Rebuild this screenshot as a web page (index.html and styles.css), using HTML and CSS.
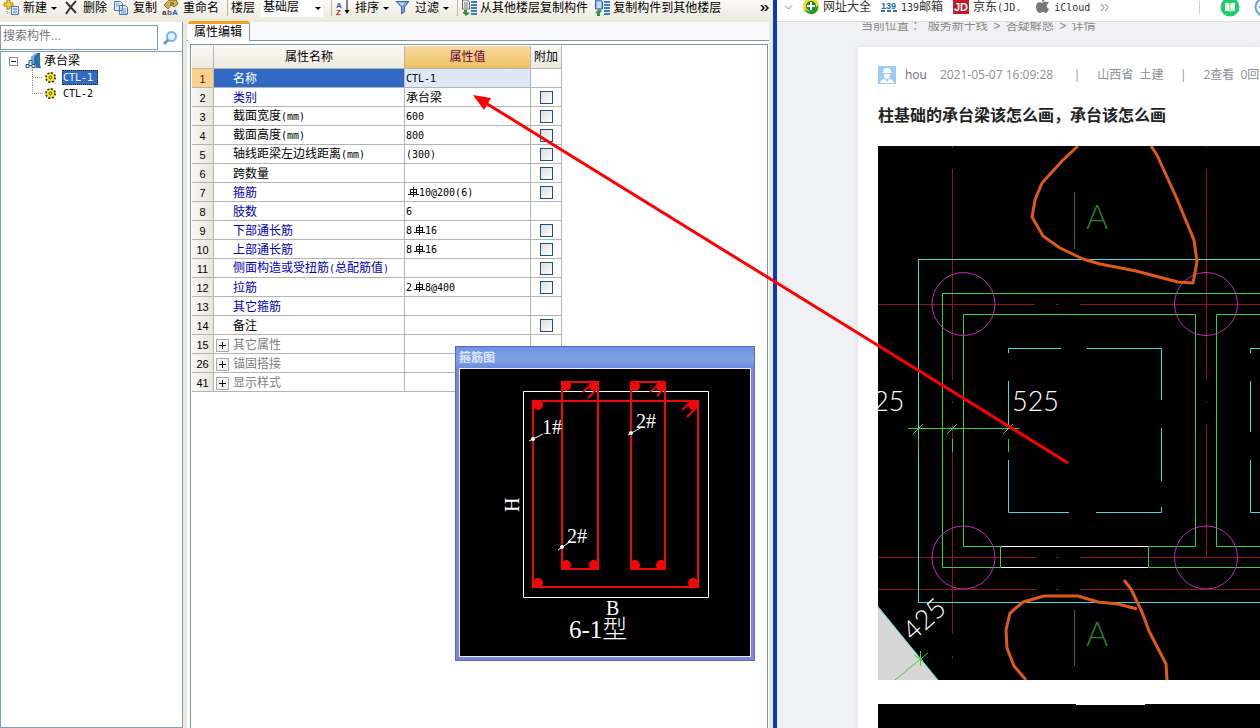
FILE: index.html
```html
<!DOCTYPE html>
<html lang="zh-CN">
<head>
<meta charset="utf-8">
<title>属性编辑</title>
<link rel="stylesheet" href="styles.css">
</head>
<body>
<div class="desktop">
  <section class="app">
    <header class="toolbar">
      <button class="tool"><svg class="icon" viewBox="0 0 16 16"><path d="M4 0h3v3h3v3H7v3H4V6H1V3h3z" fill="#f5cf3c" stroke="#b08a18"/><path d="M8.500 6.500h7v8h-7z" fill="#dbe9fb" stroke="#4876b8"/><path d="M10 9h4M10 12h4" stroke="#4876b8"/><path d="M4 9v4h4" fill="none" stroke="#777" stroke-dasharray="1 1"/></svg>新建<i class="caret"></i></button>
      <button class="tool"><svg class="icon" viewBox="0 0 16 16"><path d="M3 2l10 11M13 1C9 5 6 9 3 14" fill="none" stroke="#3a3a3a" stroke-width="2"/></svg>删除</button>
      <button class="tool"><svg class="icon" viewBox="0 0 16 16"><path d="M1.500 1.500h6l2 2v7h-8zM6.500 5.500h6l2 2v7h-8z" fill="#dce9fb" stroke="#4b74b4"/><path d="M3 4h3M3 6h3M8 9h5M8 11h5M8 13h5" stroke="#6d94cd"/></svg>复制</button>
      <button class="tool"><svg class="icon" viewBox="0 0 16 16"><path d="M1 5l5-5h7l2 4-4 3-3-2-3 4z" fill="#d9ae52" stroke="#8b6b2a"/><path d="M7 2h4v3H7z" fill="#6f8f54"/><text class="icon-letter" x="-1" y="15" fill="#333">a</text><text class="icon-letter" x="4" y="15" fill="#555">b</text><text class="icon-letter" x="9" y="15" fill="#2258a5">A</text></svg>重命名</button>
      <span class="separator"></span>
      <label class="floor-label" for="floor">楼层</label>
      <span class="floor-box"><select id="floor"><option>基础层</option></select><i class="caret"></i></span>
      <span class="separator"></span>
      <button class="tool"><svg class="icon" viewBox="0 0 16 16"><text class="icon-letter" x="1" y="8" fill="#2858a8">A</text><text class="icon-letter" x="1" y="15" fill="#b52b2b">Z</text><path d="M12 0v12" stroke="#111"/><path d="M9.500 10h5L12 14z"/></svg>排序<i class="caret"></i></button>
      <button class="tool"><svg class="icon" viewBox="0 0 16 16"><path d="M1 1.500h13L9.500 7v5l-3 2V7z" fill="#6f9fe4" stroke="#4068b4"/><path d="M3 2.500h7L7.500 6z" fill="#b9d4f8"/></svg>过滤<i class="caret"></i></button>
      <span class="separator"></span>
      <button class="tool wide"><svg class="icon" viewBox="0 0 16 16"><path d="M1.500 0v9h7V2L6.500 0z" fill="#eee" stroke="#666"/><path d="M3 3h4M3 5h4M3 7h4" stroke="#777"/><path d="M10 2h6M10 5h6M10 8h6M10 11h6M10 14h6" stroke="#397dc6" stroke-width="2"/><path d="M3 10v2H1l4 4 4-3-3-1v-2z" fill="#319442"/></svg>从其他楼层复制构件</button>
      <button class="tool wide"><svg class="icon" viewBox="0 0 16 16"><path d="M1.500 0v9h7V2L6.500 0z" fill="#8cb9ee" stroke="#315f9e"/><path d="M3 3h4M3 5h4M3 7h4" stroke="#fff"/><path d="M10 2h6M10 5h6M10 8h6M10 11h6M10 14h6" stroke="#397dc6" stroke-width="2"/><path d="M3 16v-3H1l4-4 3 2-2 2v3z" fill="#319442"/></svg>复制构件到其他楼层</button>
      <button class="tool more" aria-label="更多"><svg class="chevrons" viewBox="0 0 9 6"><path d="M1 0l3 3-3 3M5 0l3 3-3 3" fill="none" stroke="#111" stroke-width="1.500"/></svg></button>
    </header>
    <div class="workspace">
      <aside class="sidebar">
        <div class="search">
          <input class="search-input" type="text" placeholder="搜索构件..." aria-label="搜索构件">
          <button class="search-button" aria-label="搜索"><svg class="icon" viewBox="0 0 16 16"><circle cx="9.500" cy="6.500" r="4.500" fill="#e4f3fd" stroke="#72b5e4" stroke-width="2"/><path d="M6 10l-4 4" stroke="#6299cf" stroke-width="3"/></svg></button>
        </div>
        <div class="tree">
          <div class="tree-root"><svg class="expander" viewBox="0 0 9 9"><path d="M.5.5h8v8h-8z" fill="#fff" stroke="#8b8b8b"/><path d="M2 4.500h5" stroke="#111"/></svg><svg class="icon" viewBox="0 0 16 16"><path d="M6 4l5-4h4v11l1 4h-5v-4H9z" fill="#2674b2"/><path d="M6 4l5-4h3L10 4v7H6z" fill="#6cb0e2"/><path d="M1 11.500h3v-4h3v4h3v3H7v-2H4v2H1z" fill="#e2f1fc" stroke="#174f83"/><path d="M10 4l4-4M10 4v8" fill="none" stroke="#124a7c"/></svg>承台梁</div>
          <ul class="tree-list">
            <li class="tree-item"><svg class="gear" viewBox="0 0 11 11"><circle cx="5.500" cy="5.500" r="4.500" fill="#ffef2b" stroke="#3d3900" stroke-width="2" stroke-dasharray="2 1.500"/><circle cx="5.500" cy="5.500" r="3.500" fill="#ffef2b"/><circle cx="5.500" cy="5.500" r="1.500" fill="none" stroke="#554f00"/></svg><span class="tree-name selected">CTL-1</span></li>
            <li class="tree-item"><svg class="gear" viewBox="0 0 11 11"><circle cx="5.500" cy="5.500" r="4.500" fill="#ffef2b" stroke="#3d3900" stroke-width="2" stroke-dasharray="2 1.500"/><circle cx="5.500" cy="5.500" r="3.500" fill="#ffef2b"/><circle cx="5.500" cy="5.500" r="1.500" fill="none" stroke="#554f00"/></svg><span class="tree-name">CTL-2</span></li>
          </ul>
        </div>
      </aside>
      <main class="editor">
        <div class="tabs"><button class="tab">属性编辑</button></div>
        <div class="panel">
          <table class="props">
            <colgroup><col class="col-num"><col class="col-name"><col class="col-value"><col class="col-extra"></colgroup>
            <thead><tr><th></th><th>属性名称</th><th class="active">属性值</th><th>附加</th></tr></thead>
            <tbody>
              <tr class="current"><th>1</th><td class="name">名称</td><td class="latin">CTL-1</td><td></td></tr>
              <tr><th>2</th><td class="name key">类别</td><td>承台梁</td><td class="check"><input type="checkbox" aria-label="类别 附加"></td></tr>
              <tr><th>3</th><td class="name">截面宽度<span class="latin">(mm)</span></td><td class="latin">600</td><td class="check"><input type="checkbox" aria-label="截面宽度 附加"></td></tr>
              <tr><th>4</th><td class="name">截面高度<span class="latin">(mm)</span></td><td class="latin">800</td><td class="check"><input type="checkbox" aria-label="截面高度 附加"></td></tr>
              <tr><th>5</th><td class="name">轴线距梁左边线距离<span class="latin">(mm)</span></td><td class="latin">(300)</td><td class="check"><input type="checkbox" aria-label="轴线距梁左边线距离 附加"></td></tr>
              <tr><th>6</th><td class="name">跨数量</td><td></td><td class="check"><input type="checkbox" aria-label="跨数量 附加"></td></tr>
              <tr><th>7</th><td class="name key">箍筋</td><td class="latin"><svg class="rebar" viewBox="0 0 12 10"><path d="M6.500 0v10M3 2.500h7M1 7.500h11M3.500 2v6M9.500 2v6M3 5.500h7" fill="none" stroke="#111"/></svg>10@200(6)</td><td class="check"><input type="checkbox" aria-label="箍筋 附加"></td></tr>
              <tr><th>8</th><td class="name key">肢数</td><td class="latin">6</td><td></td></tr>
              <tr><th>9</th><td class="name key">下部通长筋</td><td class="latin">8<svg class="rebar" viewBox="0 0 12 10"><path d="M6.500 0v10M3 2.500h7M1 7.500h11M3.500 2v6M9.500 2v6M3 5.500h7" fill="none" stroke="#111"/></svg>16</td><td class="check"><input type="checkbox" aria-label="下部通长筋 附加"></td></tr>
              <tr><th>10</th><td class="name key">上部通长筋</td><td class="latin">8<svg class="rebar" viewBox="0 0 12 10"><path d="M6.500 0v10M3 2.500h7M1 7.500h11M3.500 2v6M9.500 2v6M3 5.500h7" fill="none" stroke="#111"/></svg>16</td><td class="check"><input type="checkbox" aria-label="上部通长筋 附加"></td></tr>
              <tr><th>11</th><td class="name key">侧面构造或受扭筋<span class="latin">(</span>总配筋值<span class="latin">)</span></td><td></td><td class="check"><input type="checkbox" aria-label="侧面构造或受扭筋 附加"></td></tr>
              <tr><th>12</th><td class="name key">拉筋</td><td class="latin">2<svg class="rebar" viewBox="0 0 12 10"><path d="M6.500 0v10M3 2.500h7M1 7.500h11M3.500 2v6M9.500 2v6M3 5.500h7" fill="none" stroke="#111"/></svg>8@400</td><td class="check"><input type="checkbox" aria-label="拉筋 附加"></td></tr>
              <tr><th>13</th><td class="name key">其它箍筋</td><td></td><td></td></tr>
              <tr><th>14</th><td class="name">备注</td><td></td><td class="check"><input type="checkbox" aria-label="备注 附加"></td></tr>
              <tr><th>15</th><td class="group"><button class="plus" aria-label="展开其它属性"></button>其它属性</td><td></td><td></td></tr>
              <tr><th>26</th><td class="group"><button class="plus" aria-label="展开锚固搭接"></button>锚固搭接</td><td></td><td></td></tr>
              <tr><th>41</th><td class="group"><button class="plus" aria-label="展开显示样式"></button>显示样式</td><td></td><td></td></tr>
            </tbody>
          </table>
        </div>
      </main>
    </div>
    <section class="popup">
      <h2 class="popup-title">箍筋图</h2>
      <svg class="stirrup" viewBox="460 369 290 287">
        <path d="M523.500 391.500h185v206h-185z" fill="none" stroke="#fff"/>
        <g fill="none" stroke="#f00808" stroke-width="2"><path d="M533 401h165v186H533zM562 382h36v187h-36zM631 382h34v187h-34z"/><path d="M583 392l9-8M588 398l9-9M650 392l9-8M657 396l7-7M682 410l9-8M687 417l9-9"/></g>
        <g fill="#f00808"><circle cx="538" cy="405" r="5"/><circle cx="693" cy="405" r="5"/><circle cx="538" cy="583" r="5"/><circle cx="693" cy="583" r="5"/><circle cx="566" cy="386" r="5"/><circle cx="594" cy="386" r="5"/><circle cx="635" cy="386" r="5"/><circle cx="661" cy="386" r="5"/><circle cx="566" cy="565" r="5"/><circle cx="594" cy="565" r="5"/><circle cx="635" cy="565" r="5"/><circle cx="661" cy="565" r="5"/></g>
        <path d="M529 441l14-7M628 435l14-8M558 550l13-9" stroke="#fff"/>
        <g fill="#fff"><circle cx="533" cy="439" r="2"/><circle cx="631" cy="433" r="2"/><circle cx="562" cy="547" r="2"/>
        <text class="mark" x="542" y="434">1#</text><text class="mark" x="636" y="428">2#</text><text class="mark" x="567" y="543">2#</text>
        <text class="mark" x="606" y="615">B</text><text class="mark" transform="translate(519 512) rotate(-90)">H</text>
        <text class="caption" x="569" y="638">6-1型</text></g>
      </svg>
    </section>
  </section>

  <section class="browser">
    <nav class="bookmarks">
      <button class="fold" aria-label="折叠"><svg class="fold-icon" viewBox="0 0 9 6"><path d="M1 1l3.500 3.500L8 1" fill="none" stroke="#888"/></svg></button>
      <a class="bookmark" href="#"><svg class="icon" viewBox="0 0 16 16"><circle cx="8" cy="7" r="8" fill="#f3dd25"/><path d="M1 10Q8 16 15 6v4q-2 6-8 5-4-1-6-5z" fill="#209a34"/><circle cx="8" cy="7" r="5" fill="#168b32"/><path d="M8 3v8M4 7h8" stroke="#fff" stroke-width="2"/></svg>网址大全</a>
      <a class="bookmark" href="#"><svg class="icon" viewBox="0 0 16 16"><text class="icon-139" x="0" y="10">139</text><path d="M0 12h4M6 12h4M12 12h4" stroke="#3474ae" stroke-width="2"/></svg><span><span class="latin-web">139</span>邮箱</span></a>
      <a class="bookmark" href="#"><svg class="icon" viewBox="0 0 16 16"><path d="M0-1h16v16H0z" fill="#c71728"/><text class="icon-jd" x="1" y="12">JD</text></svg><span>京东<span class="latin-web">(JD.</span></span></a>
      <a class="bookmark apple" href="#"><svg class="icon" viewBox="0 0 16 16"><path d="M8 4C5 2 2 4 2 8c0 3 2 6 4 6 1 0 1-1 3-1s2 1 3 1 2-2 3-4c-3-1-3-5 0-6-2-2-5-1-7 0zM8 3c0-2 1-3 3-4 0 2-1 4-3 4z" fill="#777"/></svg><span class="latin-web">iCloud</span></a>
      <button class="fold" aria-label="更多书签"><svg class="fold-icon" viewBox="0 0 9 7"><path d="M1 0l3 3.500L1 7M5 0l3 3.500L5 7" fill="none" stroke="#777"/></svg></button>
      <span class="bookmark-end"><svg class="book" viewBox="0 0 20 20"><circle cx="10" cy="10" r="9.500" fill="#21cc6a"/><path d="M5 6q3-1 5 1 2-2 5-1v8q-3-1-5 1-2-2-5-1z" fill="#e9fff1"/><path d="M10 7v8" stroke="#66d893"/></svg><svg class="book" viewBox="0 0 20 20"><circle cx="10" cy="10" r="8.500" fill="#eef5ff" stroke="#6d9ee8" stroke-width="2"/><path d="M5 10h10" stroke="#6d9ee8" stroke-width="2"/></svg></span>
    </nav>
    <div class="page">
      <div class="crumbs">当前位置 ： <a href="#">服务新干线</a><span class="crumb-sep">&gt;</span><a href="#">答疑解惑</a><span class="crumb-sep">&gt;</span>详情</div>
      <article class="card">
        <div class="meta">
          <svg class="avatar" viewBox="0 0 18 18"><path d="M0 0h18v18H0z" fill="#9ccaf8"/><path d="M5 6q0-4 4-4t4 4l1 1H4zM6 8h6v3l-2 2H8l-2-2zM2 17q1-4 5-4l2 3 2-3q4 0 5 4z" fill="#fff"/></svg>
          <span class="user">hou</span><time class="time">2021-05-07 16:09:28</time><span class="bar">|</span><span>山西省&nbsp; 土建</span><span class="bar">|</span><span>2查看&nbsp; 0回复</span>
        </div>
        <h1 class="title">柱基础的承台梁该怎么画，承台该怎么画</h1>
        <svg class="drawing" viewBox="878 146 382 534">
          <path d="M878 146h382v534H878z"/>
          <path d="M878 606l60 74h-60z" fill="#d6d6d6"/>
          <g fill="none" stroke="#8f1420"><path d="M952.500 146v2M952.500 169v211M952.500 401v2M952.500 424v210M952.500 656v3M1206.500 146v2M1206.500 169v211M1206.500 401v2M1206.500 424v133M878 304.500h157M1056 304.500h3M1080 304.500h180M878 557.500h158M1056 557.500h3M1080 557.500h180M878 589.500h158M1056 589.500h3M1080 589.500h180"/></g>
          <g fill="none" stroke="#47d9dc"><path d="M1260 259.500H918.500v343H1260M1008.500 353v-4.500H1061M1087 348.500h74.500V400M1161.500 428v53M1161.500 507v5.500H1096M1069 512.500h-60.500V460M1008.500 428v-47M1250.500 353v-4.500h10M1250.500 381v51M1250.500 460v52.500h10M878 607l60 73"/></g>
          <g fill="none" stroke="#3bd13b"><path d="M1260 293.500H942.500v274h58v-21h-37v-232h232v232h-47v21H1260M1260 314.500h-43.500v232h43.500M908 428.500h111M913 434l10-10M947 434l10-10M1003 434l10-10M918.500 439v13M952.500 439v13M1008.500 439v13M895 680l33-27M920.500 651v15M914 655l9 6"/></g>
          <path d="M1001 546.500h147M1001 567.500h147" stroke="#fff"/>
          <g fill="none" stroke="#c42ac4"><circle cx="963.500" cy="304" r="31.500"/><circle cx="1206" cy="304" r="31.500"/><circle cx="963.500" cy="557.500" r="31.500"/><circle cx="1206" cy="557.500" r="31.500"/></g>
          <path d="M1074.500 192v57M1074.500 610v56" stroke="#2b741f"/>
          <g class="cad-green"><text x="1086" y="229">A</text><text x="1086" y="646">A</text></g>
          <g class="cad-white"><text x="1012" y="411">525</text><text x="873" y="411">25</text><text transform="translate(913 642) rotate(-42)">425</text></g>
          <g fill="none" stroke="#de5a18" stroke-width="3" stroke-linejoin="round"><path d="M1078 146l-15 14-21 23-7 17-3 17 11 19 17 12 23 11 17 5 36 7 42 11 15 1 4-21-3-22-17-41-20-44-6-9M1026 680l-12-14-7-18-1-18 4-17 13-11 21-6h34l20 6 20 2 19 5M1124 580l7 9 11 23 7 19 17 33 1 16"/></g>
        </svg>
        <svg class="drawing next" viewBox="878 704 382 534"><path d="M878 704h382v534H878z"/><path d="M1076 704.500h69" stroke="#fff"/></svg>
      </article>
    </div>
  </section>
  <svg class="arrow" viewBox="0 0 1260 728"><path d="M1068 463L484 102" stroke="#f00" stroke-width="3"/><path d="M473 95l18 3-7 12z" fill="#f00"/></svg>
</div>
</body>
</html>
```

FILE: styles.css
```css
* { box-sizing: border-box; }
body { margin: 0; font: 12px/16px "Liberation Sans", "Noto Sans CJK SC", sans-serif; color: #000; }
button, input, select { font: inherit; color: inherit; }
button { margin: 0; padding: 0; border: 0; background: none; }
a { color: inherit; text-decoration: none; }
svg { display: block; flex: none; }

.desktop { position: relative; display: grid; grid-template-columns: minmax(0, 777fr) minmax(0, 483fr); height: 100vh; overflow: hidden; }

.app { position: relative; display: flex; flex-direction: column; min-width: 0; border-right: 4px solid #0838c4; background: #fff; }
.toolbar { display: flex; align-items: center; gap: 6px; height: 22px; padding: 0 4px 6px 3px; background: linear-gradient(#faf9f4, #ece9dc); white-space: nowrap; overflow: hidden; flex: none; }
.tool { display: flex; align-items: center; gap: 4px; }
.wide { gap: 3px; }
.icon { width: 16px; height: 16px; overflow: visible; }
.icon-letter { font: bold 8px "Liberation Sans", sans-serif; }
.caret { width: 0; height: 0; border: 3px solid transparent; border-top-color: #000; border-bottom: 0; }
.separator { width: 1px; height: 16px; margin: 0 -3px 0 2px; background: #b8b5a5; }
.floor-box { position: relative; width: 62px; height: 18px; background: #fff; flex: none; }
.floor-box select { appearance: none; display: block; width: 100%; height: 16px; padding: 0 2px; border: 0; background: none; line-height: 16px; }
.floor-box .caret { position: absolute; right: 2px; top: 8px; }
.more { margin-left: auto; }
.chevrons { width: 9px; height: 6px; }

.workspace { display: flex; flex: 1; min-height: 0; }
.sidebar { display: flex; flex-direction: column; width: 183px; border-right: 1px solid #7f9db9; flex: none; }
.search { display: flex; padding-top: 3px; height: 29px; flex: none; }
.search-input { width: 158px; height: 25px; padding: 0 2px 4px; border: 1px solid #7f9db9; background: #fff; }
.search-input::placeholder { color: #777; }
.search-button { display: grid; place-items: center; flex: 1; }
.tree { flex: 1; border: 1px solid #7f9db9; border-right: 0; padding: 1px 0 0 8px; }
.tree-root { display: flex; align-items: center; gap: 3px; height: 16px; }
.expander { width: 9px; height: 9px; margin-right: 4px; }
.tree-list { list-style: none; margin: 0 0 0 23px; padding: 0; }
.tree-item { display: flex; align-items: center; height: 16px; }
.tree-item::before { content: ""; width: 10px; height: 16px; margin-right: 2px; background: repeating-linear-gradient(90deg, #999 0 1px, transparent 1px 2px) 0 8px / 10px 1px no-repeat; border-left: 1px dotted #999; }
.tree-item:last-child::before { height: 8px; margin-bottom: 8px; background: none; border-bottom: 1px dotted #999; }
.gear { width: 11px; height: 11px; margin-right: 6px; }
.tree-name { padding: 0 3px 0 1px; font: 10px/15px "DejaVu Sans Mono", monospace; }
.selected { background: #316ac5; color: #fff; outline: 1px dotted #223; outline-offset: -1px; padding-right: 5px; }

.editor { display: flex; flex-direction: column; flex: 1; min-width: 0; border-left: 4px solid #ece9dc; border-right: 4px solid #ece9dc; }
.tabs { height: 19px; padding-left: 1px; border-bottom: 1px solid #7f93a8; background: #fafafc; flex: none; }
.tab { position: relative; display: block; height: 20px; margin-top: -1px; padding: 0 7px 2px 6px; border-top: 3px solid #f0a228; border-right: 1px solid #7f93a8; border-radius: 3px 3px 0 0; background: #fff; }
.panel { flex: 1; margin: 3px 1px 0 3px; padding: 1px 0 0 1px; border: 1px solid #7f93a8; border-bottom: 0; }
.props { table-layout: fixed; width: 370px; border-collapse: separate; border-spacing: 0; }
.col-num { width: 22px; }
.col-name { width: 191px; }
.col-value { width: 126px; }
.col-extra { width: 31px; }
.props th, .props td { height: 19px; padding: 1px 1px 0; border-right: 1px solid #b4b4b4; border-bottom: 1px solid #b4b4b4; line-height: 14px; font-weight: normal; white-space: nowrap; vertical-align: middle; }
.props thead th { height: 23px; padding-top: 0; background: linear-gradient(#fbfaf6, #ece9dc); }
.props thead .active { background: linear-gradient(#f9dba0, #f0bf62); color: #6b0037; }
.props tbody th { background: linear-gradient(90deg, #f8f7f2, #e9e7da); font-size: 11px; }
.props .name { padding-left: 19px; }
.props .key { color: #0000b8; }
.latin { font-family: "DejaVu Sans Mono", monospace; font-size: 10px; }
.current .name { background: #316ac5; color: #fff; }
.current .latin { background: #dfe8f6; }
.props .current th { background: #fbd08a; color: #6b0037; }
.rebar { display: inline-block; width: 12px; height: 10px; vertical-align: -1px; }
.rebar:first-child { margin-left: 1px; }
.props .check { padding: 0; }
.check input { appearance: none; display: block; width: 13px; height: 13px; margin: 1px auto 0; border: 1px solid #1c5180; background: linear-gradient(135deg, #dcdcd7, #fff); }
.props .group { padding-left: 2px; color: #808080; }
.plus { display: inline-block; width: 13px; height: 13px; margin-right: 4px; border: 1px solid #aaa; vertical-align: -2px; background: linear-gradient(#000, #000) center / 7px 1px no-repeat, linear-gradient(#000, #000) center / 1px 7px no-repeat, #f2f2f2; }

.popup { position: absolute; left: 455px; top: 346px; width: 300px; padding: 0 3px 3px; border: 1px solid #5a68c0; background: #7b86d6; }
.popup-title { margin: 0 -3px; height: 21px; padding-left: 3px; line-height: 23px; font-size: 12px; color: #dce6fc; background: linear-gradient(#6f8fe0, #7ea2e6 60%, #6f8be0); }
.stirrup { width: 100%; background: #000; border: 1px solid #eee; }
.mark { font: 20px "Liberation Serif", serif; }
.caption { font: 300 25px "Liberation Serif", "Noto Sans CJK SC", serif; }

.browser { display: flex; flex-direction: column; min-width: 0; overflow: hidden; background: #f0f1f4; }
.bookmarks { display: flex; align-items: center; height: 22px; padding: 0 0 7px 7px; gap: 10px; background: #fff; border-bottom: 1px solid #dcdcdc; white-space: nowrap; color: #333; flex: none; z-index: 1; }
.fold-icon { width: 9px; height: 7px; }
.bookmark { display: flex; align-items: center; gap: 4px; }
.latin-web { font: 10px "DejaVu Sans Mono", monospace; }
.apple { margin-left: 3px; }
.icon-139 { font: bold 9px "Liberation Sans", sans-serif; fill: #2469a8; }
.icon-jd { font: bold 11px "Liberation Sans", sans-serif; fill: #fff; }
.bookmark-end { display: flex; align-items: center; gap: 14px; height: 13px; margin-left: auto; margin-right: -14px; padding-left: 20px; border-left: 1px solid #ccc; }
.book { width: 20px; height: 20px; }
.page { flex: 1; min-height: 0; padding-left: 81px; overflow: hidden; }
.crumbs { height: 25px; margin-top: -4px; padding-left: 3px; color: #888; white-space: nowrap; }
.crumb-sep { display: inline-block; width: 18px; text-align: center; }
.card { margin-top: 4px; padding: 18px 0 0 20px; background: #fff; box-shadow: 0 0 6px #ddd; }
.meta { display: flex; align-items: center; height: 20px; color: #8c8f94; white-space: nowrap; overflow: hidden; font-family: "Open Sans", "Noto Sans CJK SC", sans-serif; }
.meta > * { flex: none; }
.avatar { width: 18px; height: 18px; margin-right: 9px; }
.user { margin-right: 13px; color: #687080; }
.time { margin-right: 4px; }
.bar { width: 40px; text-align: center; }
.title { margin: 17px 0 20px; font: bold 16px/24px "Noto Sans CJK SC", sans-serif; color: #222; white-space: nowrap; }
.drawing { width: 100%; }
.next { margin-top: 24px; }
.cad-green { font: 300 34px Lato, sans-serif; fill: #2f8022; }
.cad-white { font: 300 27px Lato, sans-serif; fill: #fff; }

.arrow { position: absolute; left: 0; top: 0; width: 100%; pointer-events: none; }
```
